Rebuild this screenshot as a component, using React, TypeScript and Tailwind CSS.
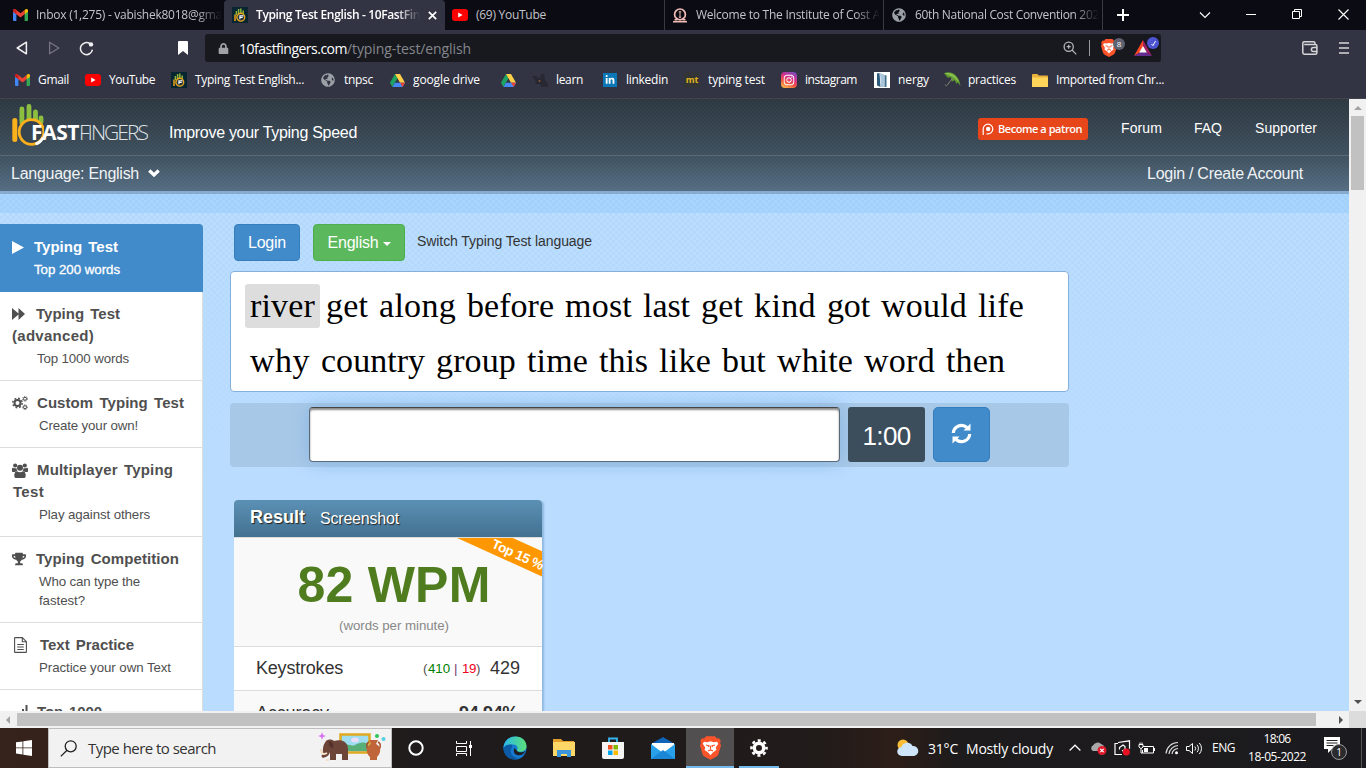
import React, { useLayoutEffect, useRef } from "react";
import { SiBrave } from "react-icons/si";
import { FaTrophy, FaInstagram, FaLinkedinIn, FaGlobeAmericas, FaLock } from "react-icons/fa";

/* Spreads a single line of text over a given width through letter spacing. */
function Fit({ w, className = "", children }: { w: number; className?: string; children: string }) {
  const ref = useRef<HTMLSpanElement>(null);
  useLayoutEffect(() => {
    const el = ref.current;
    if (!el) return;
    el.style.letterSpacing = "0px";
    const natural = el.getBoundingClientRect().width;
    el.style.letterSpacing = (w - natural) / children.length + "px";
  }, [w, children]);
  return (
    <span ref={ref} className={"inline-block shrink-0 whitespace-nowrap " + className}>
      {children}
    </span>
  );
}

function Gmail() {
  return (
    <svg width="15" height="12" viewBox="0 0 15 12" className="shrink-0">
      <path d="M0 1.5V11a1 1 0 0 0 1 1h2.4V4z" fill="#4285f4" />
      <path d="M15 1.5V11a1 1 0 0 1-1 1h-2.4V4z" fill="#34a853" />
      <path d="M0 1.6C0 .2 1.6-.3 2.7.5L7.5 4.2 11.6 1v4.2L7.5 8.4 3.4 5.2 0 2.6z" fill="#ea4335" />
      <path d="M11.6 1l.8-.6C13.4-.3 15 .2 15 1.6v1.2l-3.4 2.5z" fill="#fbbc04" />
      <path d="M0 1.6v1.2l3.4 2.5V1l-.7-.5C1.6-.3 0 .2 0 1.6z" fill="#c5221f" />
    </svg>
  );
}

function YouTube() {
  return (
    <svg width="16" height="12" viewBox="0 0 16 12" className="shrink-0">
      <rect width="16" height="12" rx="3" fill="#ff0000" />
      <path d="M6.2 3.5v5L10.6 6z" fill="#fff" />
    </svg>
  );
}

function TenFast() {
  return (
    <svg width="16" height="16" viewBox="0 0 16 16" className="shrink-0">
      <rect width="16" height="16" fill="#082632" />
      <path d="M4.4 8V4M6.6 7V2M8.8 7V1.6M11.2 8V3.6" stroke="#8fb63a" strokeWidth="1.5" fill="none" />
      <circle cx="8.8" cy="10.2" r="3.9" fill="#22333a" stroke="#eaa51c" strokeWidth="1.4" />
      <path d="M3 7.4v6.600" stroke="#eaa51c" strokeWidth="1.5" />
      <path d="M7.900 12.300V8.900h3.600M7.900 10.500h2.800" stroke="#fff" strokeWidth="1.100" fill="none" />
    </svg>
  );
}

function Drive() {
  return (
    <svg width="15" height="13" viewBox="0 0 15 13" className="shrink-0">
      <path d="M5 0L0 8.7 2.4 13 7.5 4.3z" fill="#1ea362" />
      <path d="M5 0h5l5 8.7h-5z" fill="#ffcf48" />
      <path d="M2.4 13l2.500-4.300H15L12.600 13z" fill="#4688f4" />
      <path d="M12.600 13l-2.500-4.300H15z" fill="#ea4335" />
    </svg>
  );
}

function Institute() {
  return (
    <svg width="14" height="15" viewBox="0 0 14 15" className="shrink-0">
      <circle cx="7" cy="6.400" r="5.400" fill="none" stroke="#f3bdb6" strokeWidth="1.700" />
      <path d="M7 3.500v6M5.800 3.800h2.400M5.800 9.200h2.400" stroke="#f3bdb6" strokeWidth="1" />
      <path d="M0 13.800h14M1.500 11.800h3M9.500 11.800h3" stroke="#f3bdb6" strokeWidth="1.500" />
    </svg>
  );
}

function Umbrella() {
  return (
    <svg width="17" height="16" viewBox="0 0 17 16" className="shrink-0">
      <path d="M0 1.200C6-1.600 15 2 16.500 14l-2.600-3.400-1.500 1.200-1.600-3.600-3 1.200-1-4.200-3 .6z" fill="#5f9a2e" />
      <path d="M1 1.200C7 0 12 3 15.400 10.400L9 5z" fill="#8cc152" />
      <path d="M8.600 6L3.200 13.200c-.8 1-2 .6-1.800-.6" stroke="#7d8a70" strokeWidth="1" fill="none" />
    </svg>
  );
}

function Folder() {
  return (
    <svg width="16" height="13" viewBox="0 0 16 13" className="shrink-0">
      <path d="M0 1.300C0 .5.5 0 1.200 0h4.200l1.400 1.600H15c.6 0 1 .4 1 1V12c0 .6-.4 1-1 1H1c-.6 0-1-.4-1-1z" fill="#e8b33a" />
      <path d="M0 3.600h16V12c0 .6-.4 1-1 1H1c-.6 0-1-.4-1-1z" fill="#ffd65a" />
    </svg>
  );
}

function Tab({ cell, icon, text, w, active, fade }: { cell: string; icon: React.ReactNode; text: string; w: number; active?: boolean; fade?: boolean }) {
  return (
    <div className={"flex h-[30px] shrink-0 items-center " + cell}>
      <span className="flex w-4 shrink-0 justify-center">{icon}</span>
      <span className={"ml-2 " + (fade ? "[mask-image:linear-gradient(90deg,#000_86%,transparent)]" : "")}>
        <Fit w={w} className={active ? "font-semibold text-white" : "text-[#c3c3c8]"}>
          {text}
        </Fit>
      </span>
      {active && (
        <svg width="9" height="9" viewBox="0 0 9 9" className="ml-[8px] shrink-0">
          <path d="M.8.8l7.400 7.400M8.200.8L.8 8.200" stroke="#fff" strokeWidth="1.700" />
        </svg>
      )}
    </div>
  );
}

function Tabs() {
  return (
    <div className="flex h-[30px] bg-[#0b0b14] text-[12px]">
      <Tab cell="w-[224px] pl-3" icon={<Gmail />} text="Inbox (1,275) - vabishek8018@gma" w={186} fade />
      <Tab cell="w-[221px] rounded-t-[4px] bg-[#323443] pl-2" icon={<TenFast />} text="Typing Test English - 10FastFin" w={164} active fade />
      <Tab cell="w-[220px] border-r border-[#3a3a42] pl-[7px]" icon={<YouTube />} text="(69) YouTube" w={70} />
      <Tab cell="w-[219px] border-r border-[#3a3a42] pl-[7px]" icon={<Institute />} text="Welcome to The Institute of Cost A" w={184} fade />
      <Tab cell="w-[219px] border-r border-[#3a3a42] pl-[7px]" icon={<FaGlobeAmericas size={14} color="#9aa0a6" />} text="60th National Cost Convention 202" w={184} fade />
      <div className="flex h-[30px] flex-1 items-center text-white">
        <svg width="12" height="12" viewBox="0 0 12 12" className="ml-[14px]">
          <path d="M6 0v12M0 6h12" stroke="currentColor" strokeWidth="2" />
        </svg>
        <svg width="12" height="8" viewBox="0 0 12 8" className="ml-[70px]">
          <path d="M1 1.500l5 5 5-5" stroke="currentColor" strokeWidth="1.100" fill="none" />
        </svg>
        <svg width="10" height="10" viewBox="0 0 10 10" className="ml-[35px]">
          <path d="M0 4.500h10" stroke="currentColor" />
        </svg>
        <svg width="10" height="10" viewBox="0 0 10 10" className="mb-[2px] ml-9">
          <path d="M.5 2.500h7v7h-7zM2.500 2.500v-2h7v7h-2" stroke="currentColor" fill="none" />
        </svg>
        <svg width="11" height="11" viewBox="0 0 11 11" className="mb-[2px] ml-9">
          <path d="M.5.5l10 10M10.500.5l-10 10" stroke="currentColor" strokeWidth="1.100" />
        </svg>
      </div>
    </div>
  );
}

function BraveLion({ className }: { className: string }) {
  return (
    <svg viewBox="0 0 16 18" className={className}>
      <path d="M4.600 0h6.800l1.500 1.700 1.600-.2 1.300 2-.5 1.600.7 2-1.900 6.400c-.3 1-1 1.600-1.800 2.200L8 18l-4.300-2.300c-.8-.6-1.500-1.200-1.800-2.200L0 7.100l.7-2L.2 3.500l1.300-2 1.600.2z" fill="#fb542b" />
      <path d="M3 4.200l2.500.4L8 3.900l2.500.7 2.500-.4.9 1.500-1.900 3 .5 1.900-2.700 1.800L8 14.600l-1.800-2.200-2.700-1.800.5-1.900-1.900-3z" fill="#fff" />
      <path d="M4.600 6.700l2.300.6-.5 1M11.400 6.700l-2.300.6.5 1M8 7.300v2.600M6 11.300l2-.9 2 .9" stroke="#fb542b" strokeWidth=".9" fill="none" />
    </svg>
  );
}

function Toolbar() {
  return (
    <div className="flex h-9 items-center bg-[#323443]">
      <svg width="12" height="14" viewBox="0 0 12 14" className="ml-4">
        <path d="M10.400 1.200v11.600L1.200 7z" fill="none" stroke="#f0f0f2" strokeWidth="1.500" strokeLinejoin="round" />
      </svg>
      <svg width="12" height="14" viewBox="0 0 12 14" className="ml-5">
        <path d="M1.600 1.200v11.600L10.800 7z" fill="none" stroke="#74757f" strokeWidth="1.300" strokeLinejoin="round" />
      </svg>
      <svg width="15" height="15" viewBox="0 0 15 15" className="ml-[19px]">
        <path d="M11.200 2.900A6 6 0 1 0 13.400 8.600" fill="none" stroke="#f0f0f2" strokeWidth="1.500" />
        <circle cx="12" cy="3.400" r="2.200" fill="#f0f0f2" />
      </svg>
      <svg width="10" height="14" viewBox="0 0 10 14" className="ml-[84px]">
        <path d="M0 1.200C0 .5.5 0 1.200 0h7.600c.7 0 1.200.5 1.200 1.200V14l-5-4-5 4z" fill="#fff" />
      </svg>
      <div className="ml-[17px] flex h-7 w-[956px] items-center rounded-[3px] bg-[#17191f]">
        <FaLock size={11} color="#a0a2a8" className="ml-[13px] shrink-0" />
        <div className="ml-[10px] flex text-[14px]">
          <Fit w={108} className="text-white">10fastfingers.com</Fit>
          <Fit w={124} className="text-[#85878d]">/typing-test/english</Fit>
        </div>
        <svg width="14" height="14" viewBox="0 0 14 14" className="ml-[592px]">
          <circle cx="5.700" cy="5.700" r="4.600" fill="none" stroke="#b4b6ba" strokeWidth="1.300" />
          <path d="M9 9l4.300 4.300M3.700 5.700h4M5.700 3.700v4" stroke="#b4b6ba" strokeWidth="1.200" />
        </svg>
        <div className="ml-[12px] h-4 w-px bg-[#9a9ba0]" />
        <div className="relative ml-[11px] h-[18px] w-[25px]">
          <BraveLion className="h-[18px] w-4" />
          <span className="absolute left-[12px] top-[-1px] flex h-3 w-3 items-center justify-center rounded-full bg-[#5f6270] text-[8px] text-white">8</span>
        </div>
        <div className="relative ml-2 h-[18px] w-[25px]">
          <svg width="18" height="16" viewBox="0 0 18 16" className="mt-px">
            <path d="M9 0L0 16l9-5.400z" fill="#ff4724" />
            <path d="M9 0l9 16-9-5.400z" fill="#9e1f63" />
            <path d="M0 16l9-5.400 9 5.400z" fill="#662d91" />
            <path d="M9 6l-3.800 6.600h7.600z" fill="#fff" />
          </svg>
          <span className="absolute left-[13px] top-[-2px] flex h-3 w-3 items-center justify-center rounded-full bg-[#4c54d2]">
            <svg width="7" height="7" viewBox="0 0 7 7">
              <path d="M1.500 4l1.400 1.600L5.600 1" stroke="#fff" fill="none" />
            </svg>
          </span>
        </div>
      </div>
      <svg width="16" height="14" viewBox="0 0 16 14" className="ml-[141px]">
        <path d="M13 3.500V2.200c0-.8-.5-1.400-1.400-1.400H2.200C1.400.8.8 1.400.8 2.200v9.400c0 .9.6 1.600 1.500 1.600h11c1 0 1.600-.6 1.600-1.500V5c0-.9-.6-1.500-1.500-1.500H2.200" fill="none" stroke="#d6d6d9" strokeWidth="1.500" />
        <path d="M15 6.400h-3.600a2 2 0 0 0 0 4H15" fill="none" stroke="#d6d6d9" strokeWidth="1.500" />
      </svg>
      <svg width="10" height="12" viewBox="0 0 10 12" className="ml-[21px]">
        <path d="M0 1h10M0 6h10M0 11h10" stroke="#d6d6d9" strokeWidth="1.600" />
      </svg>
    </div>
  );
}

const bookmarks: { cell: string; icon: React.ReactNode; text?: string; w?: number }[] = [
  { cell: "w-[71px]", icon: <Gmail />, text: "Gmail", w: 31 },
  { cell: "w-[86px]", icon: <YouTube />, text: "YouTube", w: 46 },
  { cell: "w-[149px]", icon: <TenFast />, text: "Typing Test English...", w: 109 },
  { cell: "w-[69px]", icon: <FaGlobeAmericas size={14} color="#9aa0a6" />, text: "tnpsc", w: 29 },
  { cell: "w-[111px]", icon: <Drive />, text: "google drive", w: 67 },
  { cell: "w-8", icon: <Drive /> },
  {
    cell: "w-[70px]",
    icon: (
      <svg width="16" height="14" viewBox="0 0 16 14">
        <path d="M0 3h5l1 2h2l1-4h3l1 6 3 4v3h-6l-2-3H4L3 7z" fill="#272832" />
        <circle cx="7.500" cy="8" r="1" fill="#8d5a35" />
      </svg>
    ),
    text: "learn",
    w: 27,
  },
  {
    cell: "w-[82px]",
    icon: (
      <span className="flex size-[14px] items-center justify-center bg-[#0a78b8]">
        <FaLinkedinIn size={10} color="#fff" />
      </span>
    ),
    text: "linkedin",
    w: 42,
  },
  { cell: "w-[97px]", icon: <span className="flex size-4 items-center justify-center rounded-[2px] bg-[#323437] text-[9px] font-bold text-[#e2b714]">mt</span>, text: "typing test", w: 57 },
  {
    cell: "w-[93px]",
    icon: (
      <span className="flex size-4 items-center justify-center rounded-[4px] bg-[linear-gradient(25deg,#fdc04e_5%,#f0563f_35%,#d62f8c_62%,#6a51c9)]">
        <FaInstagram size={12} color="#fff" />
      </span>
    ),
    text: "instagram",
    w: 52,
  },
  {
    cell: "w-[70px]",
    icon: (
      <svg width="16" height="16" viewBox="0 0 16 16">
        <rect width="16" height="16" fill="#fff" />
        <path d="M3 1.500L5.500 1l1 14L3 13.500z" fill="#2c5a7c" />
        <path d="M6 1l4 1.500V15H7z" fill="#a9c6dc" />
        <path d="M10.500 3l2 .5V15h-2z" fill="#41708f" />
      </svg>
    ),
    text: "nergy",
    w: 31,
  },
  { cell: "w-[88px]", icon: <Umbrella />, text: "practices", w: 48 },
  { cell: "w-[140px]", icon: <Folder />, text: "Imported from Chr...", w: 108 },
];

function Bookmarks() {
  return (
    <div className="flex h-[33px] items-center border-b border-[#45444c] bg-[#323443] pb-1 pl-[14px] text-[12px] text-white">
      {bookmarks.map((b, i) => (
        <div key={i} className={"flex shrink-0 items-center " + b.cell}>
          <span className="flex w-4 shrink-0 justify-center">{b.icon}</span>
          {b.text && (
            <span className="ml-2">
              <Fit w={b.w ?? 40}>{b.text}</Fit>
            </span>
          )}
        </div>
      ))}
    </div>
  );
}

function Logo() {
  return (
    <div className="flex h-[44px] w-[137px] items-end">
      <svg width="33" height="44" viewBox="0 0 33 44" className="shrink-0">
        <path d="M3.800 17.500v19" stroke="#fbb01c" strokeWidth="5" strokeLinecap="round" />
        <path d="M10.900 6v14M18 3.500v13M24.500 9v8M30 15v4" stroke="#8cbf3f" strokeWidth="4.800" strokeLinecap="round" />
        <circle cx="20.500" cy="29" r="12.300" fill="#36444f" stroke="#fbb01c" strokeWidth="2.800" />
        <path d="M32 34.500a12.500 12.500 0 0 1-7.500 6.500" stroke="#fff" strokeWidth="2.800" fill="none" />
      </svg>
      <span className="mb-[4px] ml-[-13px] flex font-['Open_Sans',sans-serif] text-[21px] leading-[22px]">
        <Fit w={48} className="font-bold text-white">FAST</Fit>
        <Fit w={68} className="font-light text-[#dfe3e6]">FINGERS</Fit>
      </span>
    </div>
  );
}

const ARIAL = "font-['Liberation_Sans',Arial,sans-serif]";

function Header() {
  return (
    <header className="flex h-[95px] flex-col border-b-[3px] border-[#86abce] bg-[repeating-conic-gradient(#ffffff06_0_25%,transparent_0_50%),linear-gradient(#2c3740,#3d4f5d_60%,#546c82)] bg-[size:4px_4px,auto] text-white">
      <div className="flex h-14 justify-between pl-[11px]">
        <div className="flex pt-[4px]">
          <Logo />
          <div className="ml-[21px] mt-[20px] text-[16px] leading-5">
            <Fit w={188}>Improve your Typing Speed</Fit>
          </div>
        </div>
        <div className="mr-[32px] mt-[19px] flex h-[22px] items-center text-[14px]">
          <div className="flex h-[22px] w-[110px] items-center rounded-[3px] bg-[#e6461a] pl-1">
            <svg width="12" height="12" viewBox="0 0 12 12">
              <path d="M1.200 12V6a4.800 4.800 0 1 1 4.800 4.800H4.500" stroke="#fff" strokeWidth="1.200" fill="none" />
              <circle cx="6.200" cy="6" r="2.200" fill="#fff" />
            </svg>
            <span className="ml-1 flex font-['Open_Sans',sans-serif] text-[11px] font-semibold">
              <Fit w={84}>Become a patron</Fit>
            </span>
          </div>
          <span className="ml-[33px] mt-[-1px] flex"><Fit w={41}>Forum</Fit></span>
          <span className="ml-[32px] mt-[-1px] flex"><Fit w={28}>FAQ</Fit></span>
          <span className="ml-[33px] mt-[-1px] flex"><Fit w={62}>Supporter</Fit></span>
        </div>
      </div>
      <div className="flex h-9 items-center justify-between border-t border-[#5c6a75] pl-[11px] pr-[46px] text-[16px] text-[#f0f3f5]">
        <div className="flex items-center">
          <Fit w={128}>Language: English</Fit>
          <svg width="12" height="9" viewBox="0 0 12 9" className="ml-[9px]">
            <path d="M1.300 1.500L6 6l4.700-4.500" stroke="#fff" strokeWidth="3.200" fill="none" />
          </svg>
        </div>
        <Fit w={156}>Login / Create Account</Fit>
      </div>
    </header>
  );
}

function Gears() {
  return (
    <svg width="16" height="16" viewBox="0 0 16 16">
      <g fill="none" stroke="currentColor">
        <circle cx="5.500" cy="8" r="3" strokeWidth="2" />
        <circle cx="5.500" cy="8" r="4.700" strokeWidth="1.500" strokeDasharray="1.850 1.840" />
        <circle cx="13" cy="3.800" r="1.500" strokeWidth="1" />
        <circle cx="13" cy="3.800" r="2.400" strokeWidth=".9" strokeDasharray="1 .88" />
        <circle cx="13" cy="12.200" r="1.500" strokeWidth="1" />
        <circle cx="13" cy="12.200" r="2.400" strokeWidth=".9" strokeDasharray="1 .88" />
      </g>
    </svg>
  );
}

function Group() {
  return (
    <svg width="16" height="15" viewBox="0 0 16 15" fill="currentColor">
      <circle cx="3.200" cy="2.500" r="2.100" />
      <circle cx="12.800" cy="2.500" r="2.100" />
      <circle cx="8" cy="4.800" r="3" />
      <path d="M0 8V6.300C0 5 .7 4.700 1.500 4.900c1 .5 2 .5 2.900.2.100 1.200.4 2 1 2.600C4.500 7.800 3.700 8.200 3 9H1C.4 9 0 8.600 0 8zM16 8V6.300c0-1.300-.7-1.600-1.500-1.400-1 .5-2 .5-2.900.2-.1 1.200-.4 2-1 2.600.9.1 1.700.5 2.400 1.300h2c.6 0 1-.4 1-1z" />
      <path d="M2.300 12.700c0-2.700.8-4.500 2.800-4.500 1.800 1.400 4 1.400 5.800 0 2 0 2.800 1.800 2.800 4.500 0 1.400-.8 2.300-2.100 2.300H4.400c-1.300 0-2.100-.9-2.100-2.300z" />
    </svg>
  );
}

function FileText() {
  return (
    <svg width="13" height="16" viewBox="0 0 13 16" className="ml-0.5" fill="none" stroke="currentColor">
      <path d="M.6 1.100C.6.8.8.6 1.100.6h7.200l4.100 4.100v10.200c0 .3-.2.500-.5.500H1.100c-.3 0-.5-.2-.5-.5zM8.300.6v4.100h4.100" strokeWidth="1.100" />
      <path d="M3.200 7.500h6.600M3.200 10h6.600M3.200 12.500h6.600" />
    </svg>
  );
}

type Item = { h: string; icon: React.ReactNode; gap: string; title: string; w: number; rest?: string; restW?: number; restPad?: string; subPad: string; sub: [string, number][] };

const items: Item[] = [
  { h: "h-[89px]", icon: <svg width="14" height="12" viewBox="0 0 14 12"><path d="M0 0l6.500 5.500V0L13 6l-6.500 6V6.500L0 12z" fill="currentColor" /></svg>, gap: "w-6", title: "Typing Test", w: 84, rest: "(advanced)", restW: 82, subPad: "pl-[25px]", sub: [["Top 1000 words", 92]] },
  { h: "h-[67px]", icon: <Gears />, gap: "w-[25px]", title: "Custom Typing Test", w: 147, subPad: "pl-[27px]", sub: [["Create your own!", 99]] },
  { h: "h-[89px]", icon: <Group />, gap: "w-[25px]", title: "Multiplayer Typing", w: 136, rest: "Test", restW: 31, restPad: "pl-px", subPad: "pl-[27px]", sub: [["Play against others", 111]] },
  { h: "h-[86px]", icon: <FaTrophy size={14} />, gap: "w-6", title: "Typing Competition", w: 143, subPad: "pl-[27px]", sub: [["Who can type the", 101], ["fastest?", 46]] },
  { h: "h-[67px]", icon: <FileText />, gap: "w-7", title: "Text Practice", w: 94, subPad: "pl-[27px]", sub: [["Practice your own Text", 132]] },
  { h: "h-[67px]", icon: <svg width="16" height="14" viewBox="0 0 16 14"><path d="M3 10v4M7 6v8M11 4v10M14.500 0v14" stroke="currentColor" strokeWidth="2" /></svg>, gap: "w-[25px]", title: "Top 1000", w: 65, subPad: "pl-[27px]", sub: [["Competition", 70]] },
];

function Sidebar() {
  return (
    <nav className="h-[487px] w-[203px] shrink-0 overflow-hidden text-[15px] text-[#4f4f4f]">
      <div className="h-[68px] rounded-tr-[4px] bg-[#428bca] pl-3 pt-3 text-white">
        <div className="flex h-[22px] items-center">
          <span className="w-[22px]">
            <svg width="12" height="13" viewBox="0 0 12 13"><path d="M0 0l12 6.500L0 13z" fill="#fff" /></svg>
          </span>
          <Fit w={84} className="font-bold [word-spacing:2px]">Typing Test</Fit>
        </div>
        <div className="flex h-[23px] items-center pl-[22px] text-[13.3px]"><Fit w={86} className="[-webkit-text-stroke:0.3px_white]">Top 200 words</Fit></div>
      </div>
      {items.map((it) => (
        <div key={it.title} className={"border-b border-r border-[#ddd] bg-white pl-3 pt-[11px] " + it.h}>
          <div className="flex h-[22px] items-center">
            <span className={"shrink-0 " + it.gap}>{it.icon}</span>
            <Fit w={it.w} className="font-bold [word-spacing:2px]">{it.title}</Fit>
          </div>
          {it.rest && (
            <div className={"flex h-[22px] items-center " + (it.restPad ?? "")}>
              <Fit w={it.restW ?? 50} className="font-bold">{it.rest}</Fit>
            </div>
          )}
          <div className={"flex flex-col pt-[2px] text-[13.3px] leading-[19px] " + it.subPad}>
            {it.sub.map(([s, w]) => (
              <div key={s} className="flex h-[19px]"><Fit w={w}>{s}</Fit></div>
            ))}
          </div>
        </div>
      ))}
    </nav>
  );
}

const lines: [string, number][][] = [
  [["river", 65], ["get", 42], ["along", 77], ["before", 87], ["most", 67], ["last", 47], ["get", 42], ["kind", 62], ["got", 43], ["would", 86], ["life", 46]],
  [["why", 60], ["country", 104], ["group", 80], ["time", 61], ["this", 49], ["like", 52], ["but", 44], ["white", 76], ["word", 71], ["then", 59]],
];

function WordBox() {
  return (
    <div className="mt-[10px] flex h-[121px] w-[839px] flex-col gap-[11px] rounded-[4px] border border-[#84b1dc] bg-white pl-[14px] pt-3 font-['Liberation_Serif','Times_New_Roman',serif] text-[34px] leading-[44px] text-black">
      {lines.map((words, r) => (
        <div key={r} className="flex h-11 gap-px">
          {words.map(([word, w], i) => (
            <span key={i} className={"flex h-11 items-center rounded-[3px] px-[5px] " + (r === 0 && i === 0 ? "bg-[#ddd]" : "")}>
              <Fit w={w}>{word}</Fit>
            </span>
          ))}
        </div>
      ))}
    </div>
  );
}

function InputRow() {
  return (
    <div className="mt-[11px] flex h-16 w-[839px] rounded-[4px] bg-[#a8c8e7] pl-[79px] pt-1">
      <div className="h-[55px] w-[531px] rounded-[4px] border border-[#5a6a78] border-t-[#444] bg-white shadow-[inset_0_2px_2px_#8a8a8a,0_0_18px_#87b5e0]" />
      <div className="relative ml-2 flex h-[55px] w-[77px] items-center justify-center rounded-[3px] bg-[#3c4d5c] pt-[3px] text-[26px] text-white">
        <Fit w={48}>1:00</Fit>
      </div>
      <div className="relative ml-2 flex h-[55px] w-[57px] items-center justify-center rounded-[5px] border border-[#357ebd] bg-[#428bca] pb-[3px]">
        <svg width="21" height="21" viewBox="0 0 21 21">
          <path d="M2.300 10A8.200 8.200 0 0 1 16 4.500M18.700 11A8.200 8.200 0 0 1 5 16.500" stroke="#fff" strokeWidth="3.200" fill="none" />
          <path d="M19.500.5v7h-7zM1.500 20.500v-7h7z" fill="#fff" />
        </svg>
      </div>
    </div>
  );
}

function Result() {
  return (
    <div className="ml-1 mt-[33px] h-[230px] w-[308px] rounded-t-[4px] bg-[#f9f9f9] text-[#333] shadow-[2px_1px_2px_#8fb8e0]">
      <div className="flex h-[37px] items-center rounded-t-[4px] bg-[linear-gradient(#5b90b5,#437190)] pb-[2px] pl-[16px] text-white [text-shadow:1px_1px_1px_#222]">
        <Fit w={55} className="text-[18px] font-bold">Result</Fit>
        <span className="ml-[15px] mt-[2px] flex text-[16px]"><Fit w={79}>Screenshot</Fit></span>
      </div>
      <div className="relative h-[110px] border-y border-[#ddd] text-center">
        <div className="absolute inset-0 overflow-hidden">
          <div className="absolute left-[208px] top-[3px] h-[23px] w-[150px] rotate-[24.400deg] bg-[#ff9800]" />
        </div>
        <div className="absolute left-[256px] top-[8px] flex rotate-[24.400deg] text-[13.500px] font-bold leading-[18px] text-white"><Fit w={57}>Top 15 %</Fit></div>
        <div className="flex justify-center pl-[12px] pt-[18px] text-[50px] font-bold leading-[58px] text-[#507c20]"><Fit w={193}>82 WPM</Fit></div>
        <div className="flex justify-center pl-[12px] pt-[3px] text-[13.300px] leading-[18px] text-[#888]"><Fit w={110}>(words per minute)</Fit></div>
      </div>
      <div className="flex h-11 items-center border-b border-[#ddd] bg-white pl-[22px] text-[18px]">
        <Fit w={87}>Keystrokes</Fit>
        <span className="ml-[80px] flex text-[13.300px] text-[#555]">
          <Fit w={5}>(</Fit>
          <Fit w={22} className="text-[#008000]">410</Fit>
          <span className="mx-1 flex text-[#753a6b]"><Fit w={4}>|</Fit></span>
          <Fit w={14} className="text-[#f00020]">19</Fit>
          <Fit w={5}>)</Fit>
        </span>
        <span className="ml-[9px] flex"><Fit w={30}>429</Fit></span>
      </div>
      <div className="flex h-11 items-center justify-between pl-[22px] pr-6 text-[18px]">
        <Fit w={73}>Accuracy</Fit>
        <Fit w={59} className="font-bold">94.94%</Fit>
      </div>
    </div>
  );
}

function Page() {
  return (
    <div className={"h-[612px] w-[1349px] overflow-hidden bg-[#badcff] " + ARIAL}>
      <Header />
      <div className="h-[19px] bg-[repeating-conic-gradient(#a3d0fb_0_25%,#a8d5fd_0_50%)] bg-[size:6px_6px]" />
      <div className="flex bg-[linear-gradient(#badcff00,#badcff_280px),repeating-conic-gradient(#b4d8fd_0_25%,#bbdeff_0_50%)] bg-[size:auto,6px_6px] pt-[11px]">
        <Sidebar />
        <main className="ml-[27px] h-[487px]">
          <div className="flex h-[37px] pl-1 text-[16px] text-white">
            <div className="flex w-[66px] items-center justify-center rounded-[4px] border border-[#357ebd] bg-[#428bca]"><Fit w={38}>Login</Fit></div>
            <div className="ml-[13px] flex w-[92px] items-center justify-center rounded-[4px] border border-[#4cae4c] bg-[#5cb85c]">
              <Fit w={51}>English</Fit>
              <svg width="8" height="4" viewBox="0 0 8 4" className="ml-1 mt-[3px]"><path d="M0 0h8L4 4z" fill="#fff" /></svg>
            </div>
            <span className="ml-3 mt-[7px] flex h-5 text-[14px] leading-5 text-[#333]"><Fit w={175}>Switch Typing Test language</Fit></span>
          </div>
          <WordBox />
          <InputRow />
          <Result />
        </main>
      </div>
    </div>
  );
}

function Edge() {
  return (
    <svg width="24" height="24" viewBox="0 0 24 24">
      <defs>
        <linearGradient id="edgeTop" x1="0" x2="1"><stop offset="0" stopColor="#2ab8e8" /><stop offset="1" stopColor="#5ce07a" /></linearGradient>
      </defs>
      <circle cx="12" cy="12" r="11.500" fill="#1479cf" />
      <path d="M.5 12C1 4.500 6.500.5 12.500.5c7 0 11 5 11 9.700 0 4-3.500 5.600-6.500 5.600-2.500 0-3.500-.9-3-1.700 1.600-2.600-.4-5.600-4-5.600C5 8.500 1.500 11 .5 12z" fill="url(#edgeTop)" />
      <path d="M9 11c-3.500 5 .5 11.500 7.500 11.300C8 26 .4 20 .5 12 2 9 6 8.300 9.300 8.700z" fill="#0c59a4" />
      <path d="M13.800 14.500c.4 1.500 5 3 8.600.5-1.800 3.500-5 5-8.400 4-3-1-4-4-2.500-6.800z" fill="#1f1d1f" />
    </svg>
  );
}

function SearchArt() {
  return (
    <svg width="68" height="32" viewBox="0 0 68 32">
      <path d="M4 0l1 3 3 1-3 1-1 3-1-3-3-1 3-1z" fill="#d86cf0" />
      <rect x="22.500" y="2.500" width="29" height="18" fill="#9edcf0" stroke="#e0a920" strokeWidth="2.500" />
      <path d="M24 14c6-4 9 1 13-1s8-4 13-1v7H24z" fill="#58b078" />
      <ellipse cx="37" cy="8" rx="4" ry="2.500" fill="#e8dcf8" />
      <path d="M8 9c2-2 6-2 8 0 5-2 14-1 14 8v11h-6v-6h-6v6h-6v-8c-1 4-4 5-7 6-2-1-2-3 0-4 0-2-1-8 3-13z" fill="#6d4438" />
      <path d="M11 9c3 0 5 3 4 7-3 0-5-3-4-7z" fill="#54322b" />
      <path d="M3 17c0 5 3 6 6 4M8 28h3" stroke="#f3dfc6" strokeWidth="2" fill="none" />
      <path d="M51 10c-4 2-2 8 1 9M60 10c4 2 2 8-1 9" stroke="#a84e2a" strokeWidth="1.500" fill="none" />
      <path d="M51 8h9l-2 4c6 3 5 9 1 13v3h-7v-3c-4-4-5-10 1-13z" fill="#c0653a" />
      <circle cx="59" cy="4" r="2" fill="#2fc45c" />
      <circle cx="65.500" cy="7" r="2" fill="#56d0e0" />
    </svg>
  );
}

function Settings() {
  return (
    <svg width="18" height="18" viewBox="0 0 18 18" fill="none" stroke="#fff">
      <circle cx="9" cy="9" r="4.700" strokeWidth="3.400" />
      <circle cx="9" cy="9" r="7.500" strokeWidth="2.600" strokeDasharray="3 2.890" strokeDashoffset="1.500" />
    </svg>
  );
}

function Taskbar() {
  return (
    <footer className="flex h-10 items-center bg-[linear-gradient(90deg,#36231b,#1f1b1c_31%,#211b1a_60%,#2d1e18_65.500%,#1d1b1c_70%,#1b1a1e)] text-white">
      <div className="flex w-12 justify-center">
        <svg width="16" height="16" viewBox="0 0 16 16"><path d="M0 2.300L6.500 1.400v6.100H0zM7.300 1.300L16 0v7.500H7.300zM0 8.300h6.500v6.200L0 13.600zM7.300 8.300H16V16l-8.700-1.300z" fill="#fff" /></svg>
      </div>
      <div className="flex h-10 w-[344px] items-center border border-[#bdbdbd] bg-[#f2f2f2] pl-[11px] text-[15px] text-[#333]">
        <svg width="17" height="17" viewBox="0 0 17 17"><circle cx="10.700" cy="6.300" r="5.500" fill="none" stroke="#222" strokeWidth="1.300" /><path d="M7 10.300L.8 16.400" stroke="#222" strokeWidth="1.300" /></svg>
        <span className="ml-[11px] flex"><Fit w={128}>Type here to search</Fit></span>
        <span className="ml-[102px]"><SearchArt /></span>
      </div>
      <div className="flex h-10 w-12 items-center justify-center">
        <svg width="16" height="16" viewBox="0 0 16 16"><circle cx="8" cy="8" r="6.700" fill="none" stroke="#fff" strokeWidth="2" /></svg>
      </div>
      <div className="flex h-10 w-12 items-center justify-center">
        <svg width="16" height="15" viewBox="0 0 16 15"><path d="M.5 0v2.500h10V0M.5 5.500h10v5H.5zM.5 15v-2.500h10V15M14.500 0v15" fill="none" stroke="#fff" /><path d="M13 4h3v3h-3z" fill="#fff" /></svg>
      </div>
      <div className="flex h-10 w-[54px] items-center justify-center"><Edge /></div>
      <div className="flex h-10 w-[44px] items-center justify-center">
        <svg width="22" height="20" viewBox="0 0 22 20"><path d="M0 1h8l2 2h11v5H0z" fill="#e3a02b" /><path d="M0 4h22v14H0z" fill="#ffd766" /><path d="M4 19v-7h14v7h-4v-3H8v3z" fill="#3b96dc" /></svg>
      </div>
      <div className="flex h-10 w-[53px] items-center justify-center">
        <svg width="22" height="22" viewBox="0 0 22 22"><path d="M7 5V1.500h8V5" fill="none" stroke="#35b8f0" strokeWidth="1.800" /><path d="M0 5h22v15a2 2 0 0 1-2 2H2a2 2 0 0 1-2-2z" fill="#f4f4f4" /><path d="M6 8h4.500v4.500H6z" fill="#f25022" /><path d="M11.500 8H16v4.500h-4.500z" fill="#7fba00" /><path d="M6 13.500h4.500V18H6z" fill="#00a4ef" /><path d="M11.500 13.500H16V18h-4.500z" fill="#ffb900" /></svg>
      </div>
      <div className="flex h-10 w-[47px] items-center justify-center">
        <svg width="24" height="22" viewBox="0 0 24 22"><path d="M0 7l12-7 12 7v15H0z" fill="#0f64b8" /><path d="M1 6h22v9H1z" fill="#fff" /><path d="M0 7l12 9 12-9v15H0z" fill="#28a0ea" /><path d="M0 22l12-9 12 9z" fill="#1b86d6" /></svg>
      </div>
      <div className="flex h-10 w-[48px] items-center justify-center border-b-2 border-[#76b9ed] bg-[#524f50] pt-0.5">
        <BraveLion className="h-[24px] w-[21px]" />
      </div>
      <div className="ml-[5px] flex h-10 w-[40px] items-center justify-center border-b-2 border-[#76b9ed] pt-0.5"><Settings /></div>
      <svg width="22" height="18" viewBox="0 0 22 18" className="ml-[118px]">
        <circle cx="6" cy="6" r="5.500" fill="#f9bd3a" />
        <path d="M5 17a4.500 4.500 0 0 1-.5-9A6 6 0 0 1 15.500 7a5 5 0 0 1 1.500 10z" fill="#cfe6fa" />
      </svg>
      <span className="ml-[9px] flex text-[14px]"><Fit w={30}>31°C</Fit><span className="ml-2 flex"><Fit w={87}>Mostly cloudy</Fit></span></span>
      <svg width="12" height="8" viewBox="0 0 12 8" className="ml-[16px]"><path d="M.6 6.500L6 1.200l5.400 5.300" stroke="#fff" strokeWidth="1.200" fill="none" /></svg>
      <svg width="17" height="14" viewBox="0 0 17 14" className="ml-[9px]">
        <path d="M3 10a3 3 0 0 1 0-5.500A5 5 0 0 1 11 3a4 4 0 0 1 2 7z" fill="#a8a8a8" /><circle cx="12" cy="9.500" r="4.500" fill="#e01b2c" /><path d="M10.300 7.800l3.400 3.400M13.700 7.800l-3.400 3.400" stroke="#fff" strokeWidth="1.200" />
      </svg>
      <svg width="17" height="16" viewBox="0 0 17 16" className="ml-[7px]">
        <path d="M4 2.500L15.500.8v8M8 14.500H1V3.500h3M5.500 9.500V7.500L9 5l2 1.500M11 6v3.500L8 11" stroke="#fff" strokeWidth="1.200" fill="none" /><circle cx="12.300" cy="12" r="3.600" fill="#e81123" />
      </svg>
      <svg width="17" height="12" viewBox="0 0 17 12" className="ml-[7px]"><path d="M5 4.500h10.500v6.500H4.500V8M1 2.500h4v2.500L3.800 6.200H2.200L1 5zM2 .5v2M4 .5v2M3 6v5h1.500" stroke="#fff" fill="none" /><path d="M6 6h4v4H6zM16 6h1v3h-1z" fill="#fff" /></svg>
      <svg width="14" height="14" viewBox="0 0 14 14" className="ml-[10px]" fill="none" stroke="#ddd" strokeWidth="1.200"><path d="M1 12.500A12 12 0 0 1 13 1.500M4 13A9.500 9.500 0 0 1 13 4.500M7 13A6.500 6.500 0 0 1 13 7.500" /><circle cx="11.500" cy="11.800" r="1.500" fill="#fff" stroke="none" /></svg>
      <svg width="17" height="13" viewBox="0 0 17 13" className="ml-[7px]" fill="none" stroke="#fff"><path d="M.5 4.500h2.500l3.500-3v10l-3.500-3H.5zM8.800 4.500a3 3 0 0 1 0 4M11 2.800a5.500 5.500 0 0 1 0 7.400M13.300 1a8 8 0 0 1 0 11" /></svg>
      <span className="ml-[9px] flex text-[12px]"><Fit w={23}>ENG</Fit></span>
      <div className="ml-[13px] flex w-[58px] flex-col items-center gap-0.5 text-[12px] leading-4"><Fit w={27}>18:06</Fit><Fit w={58}>18-05-2022</Fit></div>
      <div className="relative ml-[18px] h-[26px] w-[25px]">
        <svg width="16" height="16" viewBox="0 0 16 16" className="mt-0.5"><path d="M0 0h16v12H8l-4 4v-4H0z" fill="#fff" /><path d="M2.500 3.500h11M2.500 6h11M2.500 8.500h7" stroke="#222" /></svg>
        <span className="absolute left-[7px] top-[9px] flex size-4 items-center justify-center rounded-full border border-[#999] bg-[#2b2a2d] text-[10px]">1</span>
      </div>
      <div className="ml-auto mr-1 h-10 w-px bg-[#555]" />
    </footer>
  );
}

export default function App() {
  return (
    <div className="h-[768px] w-[1366px] overflow-hidden bg-[#323443] font-['Open_Sans','Noto_Sans',sans-serif]">
      <Tabs />
      <Toolbar />
      <Bookmarks />
      <div className="flex">
        <Page />
        <div className="flex h-[612px] w-[17px] flex-col items-center bg-[#f1f1f1]">
          <svg width="8" height="4" viewBox="0 0 8 4" className="mt-[7px]"><path d="M4 0l4 4H0z" fill="#a3a3a3" /></svg>
          <div className="mt-[6px] h-[74px] w-[13px] bg-[#c1c1c1]" />
          <svg width="8" height="4" viewBox="0 0 8 4" className="mb-[7px] mt-auto"><path d="M4 4l4-4H0z" fill="#505050" /></svg>
        </div>
      </div>
      <div className="flex h-[17px] items-center bg-[#f1f1f1]">
        <svg width="4" height="8" viewBox="0 0 4 8" className="ml-[6px]"><path d="M0 4l4-4v8z" fill="#a3a3a3" /></svg>
        <div className="ml-[7px] h-[13px] w-[1299px] bg-[#c1c1c1]" />
        <svg width="4" height="8" viewBox="0 0 4 8" className="ml-[23px]"><path d="M4 4L0 0v8z" fill="#505050" /></svg>
        <div className="ml-auto h-[17px] w-[17px] bg-[#dcdcdc]" />
      </div>
      <Taskbar />
    </div>
  );
}
